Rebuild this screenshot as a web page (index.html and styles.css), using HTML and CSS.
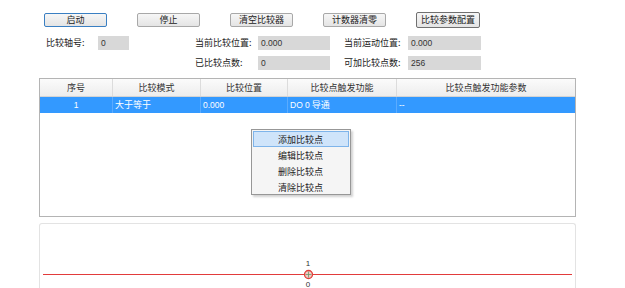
FILE: index.html
```html
<html>
<head>
  <meta charset="utf-8">
  <link rel="stylesheet" href="styles.css">
</head>
<body>
<div class="page">
  <!-- toolbar -->
  <div class="toolbar">
    <button class="btn btn-default">启动</button>
    <button class="btn">停止</button>
    <button class="btn">清空比较器</button>
    <button class="btn">计数器清零</button>
    <button class="btn btn-focus">比较参数配置</button>
  </div>

  <!-- status fields -->
  <div class="fields">
    <span class="lbl">比较轴号:</span>
    <span class="val">0</span>
    <span></span>
    <span class="lbl">当前比较位置:</span>
    <span class="val">0.000</span>
    <span></span>
    <span class="lbl">当前运动位置:</span>
    <span class="val">0.000</span>

    <span></span>
    <span></span>
    <span></span>
    <span class="lbl">已比较点数:</span>
    <span class="val">0</span>
    <span></span>
    <span class="lbl">可加比较点数:</span>
    <span class="val">256</span>
  </div>

  <!-- compare point list -->
  <div class="grid">
    <div class="grid-row grid-head">
      <div class="c1">序号</div>
      <div class="c2">比较模式</div>
      <div class="c3">比较位置</div>
      <div class="c4">比较点触发功能</div>
      <div class="c5">比较点触发功能参数</div>
    </div>
    <div class="grid-row grid-sel">
      <div class="c1 num">1</div>
      <div class="c2 left">大于等于</div>
      <div class="c3 left num">0.000</div>
      <div class="c4 left"><span class="num">DO 0</span> 导通</div>
      <div class="c5 left num">--</div>
    </div>

    <div class="menu">
      <div class="menu-item hot">添加比较点</div>
      <div class="menu-item">编辑比较点</div>
      <div class="menu-item">删除比较点</div>
      <div class="menu-item">清除比较点</div>
    </div>
  </div>

  <!-- compare point axis -->
  <div class="chart">
    <svg width="537" height="66" viewBox="0 0 537 66">
      <line x1="4" y1="50.5" x2="533" y2="50.5" stroke="#e23b3b" stroke-width="1"/>
      <text x="269" y="42" class="tick" text-anchor="middle">1</text>
      <circle cx="269.5" cy="50.5" r="4" fill="#f3c9c4" stroke="#e0403a" stroke-width="1.3"/>
      <line x1="269.5" y1="47.5" x2="269.5" y2="53.5" stroke="#6a9a6a" stroke-width="0.8"/>
      <line x1="266.5" y1="50.5" x2="272.5" y2="50.5" stroke="#6a9a6a" stroke-width="0.8"/>
      <text x="269" y="62.5" class="tick" text-anchor="middle">0</text>
    </svg>
  </div>
</div>
</body>
</html>
```

FILE: styles.css
```css
* { box-sizing: border-box; }
body {
   margin: 0;
   background: #ffffff;
   font-family: "Noto Sans CJK SC", sans-serif;
   font-size: 9px;
   color: #222222;
}
.page { padding-left: 39px; width: 576px; }

.toolbar {
   display: flex;
   align-items: center;
   gap: 30px;
   margin-top: 12px;
   padding-left: 5px;
   height: 15px;
}
.btn {
   width: 63px; height: 14px;
   padding: 0;
   font-family: "Noto Sans CJK SC", sans-serif;
   font-size: 9px; line-height: 12px;
   color: #222222;
   border: 1px solid #a8a8a8;
   border-radius: 2px;
   background: linear-gradient(#f6f6f6, #e4e4e4);
}
.btn-default { border-color: #3a7fc2; }
.btn-focus { width: 64px; height: 16px; border-color: #707070; }

.fields {
   display: grid;
   grid-template-columns: 52px 31px 66px 63px 72px 14px 64px 73px;
   grid-auto-rows: 14px;
   row-gap: 6px;
   margin-top: 9px;
   padding-left: 7px;
   align-items: center;
}
.lbl { line-height: 14px; }
.val {
   height: 14px;
   background: #d8d8d8;
   font-family: "Liberation Sans", sans-serif;
   font-size: 8.5px; line-height: 14px;
   padding-left: 3px;
   color: #333333;
}

.grid {
   position: relative;
   margin-top: 8px;
   width: 537px; height: 139px;
   border: 1px solid #b4b4b4;
   background: #ffffff;
}
.grid-row { display: flex; }
.grid-row > div { flex: none; border-right: 1px solid #dcdcdc; }
.grid-row > div:last-child { border-right: none; }
.c1 { width: 73px; }
.c2 { width: 88px; }
.c3 { width: 87px; }
.c4 { width: 109px; }
.c5 { width: 178px; }
.grid-head {
   height: 18px;
   background: linear-gradient(#fbfbfb, #ededed);
   border-bottom: 1px solid #d4d4d4;
}
.grid-head > div { text-align: center; line-height: 17px; color: #333333; }
.grid-sel { height: 16px; background: #3399ff; color: #ffffff; }
.grid-sel > div { text-align: center; line-height: 16px; border-right-color: #5aabff; }
.grid-sel .left { text-align: left; padding-left: 2px; }
.num { font-family: "Liberation Sans", sans-serif; font-size: 8.5px; }

.menu {
   position: absolute;
   left: 211px; top: 50px;
   width: 100px; height: 66px;
   padding: 1px;
   background: #f5f5f5;
   border: 1px solid #979797;
   box-shadow: 2px 2px 2px rgba(0, 0, 0, 0.18);
}
.menu-item {
   height: 16px;
   line-height: 15px;
   padding-left: 24px;
   border: 1px solid transparent;
   color: #222222;
}
.menu-item.hot { background: #cfe4fa; border-color: #7eb4ea; }

.chart {
   margin-top: 6px;
   width: 537px; height: 70px;
   border: 1px solid #e3e3e3;
   border-bottom: none;
   border-radius: 3px 3px 0 0;
}
.chart svg { display: block; margin-left: -1px; }
.tick { font-family: "Liberation Sans", sans-serif; font-size: 8px; fill: #333333; }
```
